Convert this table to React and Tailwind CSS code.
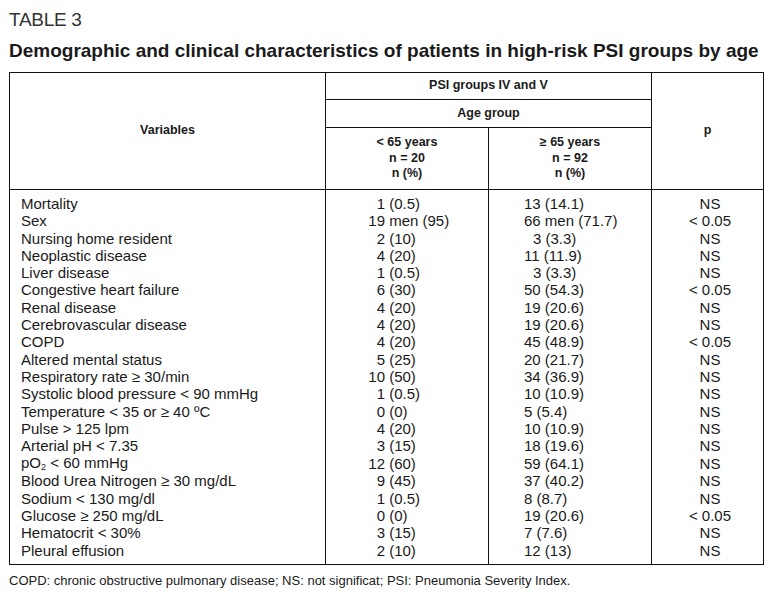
import React from "react";

const rows = [
  { v: "Mortality", a: ["1", " (0.5)"], b: "13 (14.1)", p: "NS" },
  { v: "Sex", a: ["19", " men (95)"], b: "66 men (71.7)", p: "< 0.05" },
  { v: "Nursing home resident", a: ["2", " (10)"], b: "3 (3.3)", bi: true, p: "NS" },
  { v: "Neoplastic disease", a: ["4", " (20)"], b: "11 (11.9)", p: "NS" },
  { v: "Liver disease", a: ["1", " (0.5)"], b: "3 (3.3)", bi: true, p: "NS" },
  { v: "Congestive heart failure", a: ["6", " (30)"], b: "50 (54.3)", p: "< 0.05" },
  { v: "Renal disease", a: ["4", " (20)"], b: "19 (20.6)", p: "NS" },
  { v: "Cerebrovascular disease", a: ["4", " (20)"], b: "19 (20.6)", p: "NS" },
  { v: "COPD", a: ["4", " (20)"], b: "45 (48.9)", p: "< 0.05" },
  { v: "Altered mental status", a: ["5", " (25)"], b: "20 (21.7)", p: "NS" },
  { v: "Respiratory rate ≥ 30/min", a: ["10", " (50)"], b: "34 (36.9)", p: "NS" },
  { v: "Systolic blood pressure < 90 mmHg", a: ["1", " (0.5)"], b: "10 (10.9)", p: "NS" },
  { v: "Temperature < 35 or ≥ 40 ºC", a: ["0", " (0)"], b: "5 (5.4)", p: "NS" },
  { v: "Pulse > 125 lpm", a: ["4", " (20)"], b: "10 (10.9)", p: "NS" },
  { v: "Arterial pH < 7.35", a: ["3", " (15)"], b: "18 (19.6)", p: "NS" },
  { v: "po2", a: ["12", " (60)"], b: "59 (64.1)", p: "NS" },
  { v: "Blood Urea Nitrogen ≥ 30 mg/dL", a: ["9", " (45)"], b: "37 (40.2)", p: "NS" },
  { v: "Sodium < 130 mg/dl", a: ["1", " (0.5)"], b: "8 (8.7)", p: "NS" },
  { v: "Glucose ≥ 250 mg/dL", a: ["0", " (0)"], b: "19 (20.6)", p: "< 0.05" },
  { v: "Hematocrit < 30%", a: ["3", " (15)"], b: "7 (7.6)", p: "NS" },
  { v: "Pleural effusion", a: ["2", " (10)"], b: "12 (13)", p: "NS" },
];

const Variable = ({ v }) =>
  v === "po2" ? (
    <span>
      pO<span className="text-[9px] leading-none align-[-2px]">2</span> &lt; 60 mmHg
    </span>
  ) : (
    v
  );

export default function App() {
  const last = rows.length - 1;
  return (
    <div className="w-[773px] h-[602px] bg-white text-[#1a1a1a] font-['Liberation_Sans',Arial,sans-serif] pl-[9px] pt-[8px]">
      <h1 className="text-[19px] leading-[24px] text-[#333] tracking-[-0.3px]">TABLE 3</h1>
      <h2 className="mt-[7px] text-[19px] leading-[24px] font-bold">
        Demographic and clinical characteristics of patients in high-risk PSI groups by age
      </h2>
      <table className="mt-[9px] w-[754px] table-fixed border-collapse border border-[#111]">
        <colgroup>
          <col className="w-[316px]" />
          <col className="w-[163px]" />
          <col className="w-[163px]" />
          <col className="w-[112px]" />
        </colgroup>
        <thead className="text-[12.5px] font-bold leading-[15.5px]">
          <tr className="h-[27px]">
            <th rowSpan={3} className="border border-[#111] text-center font-bold">Variables</th>
            <th colSpan={2} className="border border-[#111] text-center">PSI groups IV and V</th>
            <th rowSpan={3} className="border border-[#111] text-center">p</th>
          </tr>
          <tr className="h-[28px]">
            <th colSpan={2} className="border border-[#111] text-center">Age group</th>
          </tr>
          <tr className="h-[62px]">
            <th className="border border-[#111] text-center">
              &lt; 65 years
              <br />n = 20
              <br />n (%)
            </th>
            <th className="border border-[#111] text-center">
              ≥ 65 years
              <br />n = 92
              <br />n (%)
            </th>
          </tr>
        </thead>
        <tbody className="text-[15px] leading-[17.3px]">
          {rows.map((r, i) => {
            const pad = i === 0 ? "pt-[5px]" : i === last ? "pb-[5px]" : "";
            return (
              <tr key={i}>
                <td className={`border-r border-[#111] pl-[11px] whitespace-nowrap ${pad}`}>
                  <Variable v={r.v} />
                </td>
                <td className={`border-r border-[#111] pl-[42px] whitespace-pre ${pad}`}>
                  <span className="inline-block w-[17px] text-right">{r.a[0]}</span>
                  {r.a[1]}
                </td>
                <td className={`border-r border-[#111] whitespace-pre ${r.bi ? "pl-[44px]" : "pl-[35px]"} ${pad}`}>
                  {r.b}
                </td>
                <td className={`text-center pl-[5px] ${pad}`}>{r.p}</td>
              </tr>
            );
          })}
        </tbody>
      </table>
      <p className="mt-[7px] text-[13px] leading-[17px]">
        COPD: chronic obstructive pulmonary disease; NS: not significat; PSI: Pneumonia Severity Index.
      </p>
    </div>
  );
}
